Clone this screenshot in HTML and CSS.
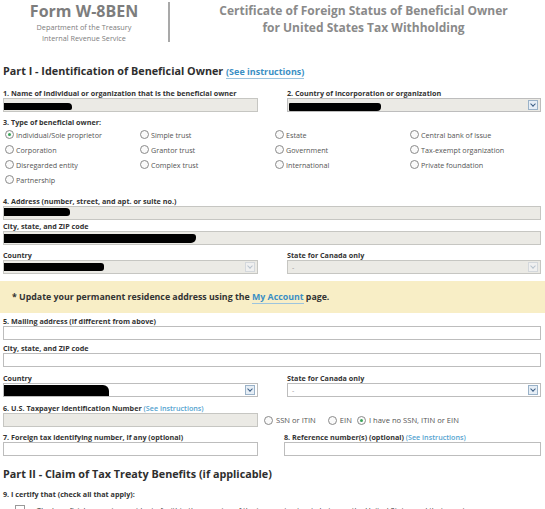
FILE: index.html
```html
<!DOCTYPE html>
<html>
<head>
<meta charset="utf-8">
<link rel="stylesheet" href="styles.css">
</head>
<body>
<div class="page">
  <header class="header">
    <div class="brand">
      <div class="form-name">Form W-8BEN</div>
      <div class="dept">Department of the Treasury</div>
      <div class="dept">Internal Revenue Service</div>
    </div>
    <div class="sep"></div>
    <div class="title">
      <div>Certificate of Foreign Status of Beneficial Owner</div>
      <div>for United States Tax Withholding</div>
    </div>
  </header>

  <h2 class="part part1">Part I - Identification of Beneficial Owner <a class="link-h">(See instructions)</a></h2>

  <div class="row two first">
    <div class="field">
      <div class="label">1. Name of individual or organization that is the beneficial owner</div>
      <div class="input gray"><span class="blob b-name"></span></div>
    </div>
    <div class="field">
      <div class="label">2. Country of incorporation or organization</div>
      <div class="input select white-sel"><span class="blob b-country2"></span><span class="arrow"></span></div>
    </div>
  </div>

  <div class="label type-label">3. Type of beneficial owner:</div>
  <div class="radios">
    <div class="radio"><span class="dot checked"></span>Individual/Sole proprietor</div>
    <div class="radio"><span class="dot"></span>Simple trust</div>
    <div class="radio"><span class="dot"></span>Estate</div>
    <div class="radio"><span class="dot"></span>Central bank of issue</div>
    <div class="radio"><span class="dot"></span>Corporation</div>
    <div class="radio"><span class="dot"></span>Grantor trust</div>
    <div class="radio"><span class="dot"></span>Government</div>
    <div class="radio"><span class="dot"></span>Tax-exempt organization</div>
    <div class="radio"><span class="dot"></span>Disregarded entity</div>
    <div class="radio"><span class="dot"></span>Complex trust</div>
    <div class="radio"><span class="dot"></span>International</div>
    <div class="radio"><span class="dot"></span>Private foundation</div>
    <div class="radio"><span class="dot"></span>Partnership</div>
  </div>

  <div class="field full addr">
    <div class="label">4. Address (number, street, and apt. or suite no.)</div>
    <div class="input gray"><span class="blob b-addr"></span></div>
  </div>
  <div class="field full city">
    <div class="label">City, state, and ZIP code</div>
    <div class="input gray"><span class="blob b-city"></span></div>
  </div>
  <div class="row two country">
    <div class="field">
      <div class="label">Country</div>
      <div class="input select gray"><span class="blob b-country"></span><span class="arrow faint"></span></div>
    </div>
    <div class="field">
      <div class="label">State for Canada only</div>
      <div class="input select gray"><span class="dash">-</span><span class="arrow faint"></span></div>
    </div>
  </div>

  <div class="banner"><span>* Update your permanent residence address using the <a class="link-b">My Account</a> page.</span></div>

  <div class="field full mail">
    <div class="label">5. Mailing address (if different from above)</div>
    <div class="input white"></div>
  </div>
  <div class="field full city2">
    <div class="label">City, state, and ZIP code</div>
    <div class="input white"></div>
  </div>
  <div class="row two country2">
    <div class="field">
      <div class="label">Country</div>
      <div class="input select white"><span class="blob b-country3"></span><span class="arrow"></span></div>
    </div>
    <div class="field">
      <div class="label">State for Canada only</div>
      <div class="input select white"><span class="dash">-</span><span class="arrow"></span></div>
    </div>
  </div>

  <div class="row tin">
    <div class="field tin-field">
      <div class="label">6. U.S. Taxpayer Identification Number <a class="link-s">(See instructions)</a></div>
      <div class="input gray"></div>
    </div>
    <div class="tin-radios">
      <div class="radio r-ssn"><span class="dot"></span>SSN or ITIN</div>
      <div class="radio r-ein"><span class="dot"></span>EIN</div>
      <div class="radio"><span class="dot checked"></span>I have no SSN, ITIN or EIN</div>
    </div>
  </div>

  <div class="row two ref">
    <div class="field">
      <div class="label">7. Foreign tax identifying number, if any (optional)</div>
      <div class="input white"></div>
    </div>
    <div class="field">
      <div class="label">8. Reference number(s) (optional) <a class="link-s">(See instructions)</a></div>
      <div class="input white"></div>
    </div>
  </div>

  <h2 class="part part2">Part II - Claim of Tax Treaty Benefits (if applicable)</h2>
  <div class="label certify">9. I certify that (check all that apply):</div>
  <div class="treaty"><span class="check"></span><span>The beneficial owner is a resident of <b>   </b> within the meaning of the income tax treaty between the United States and that country.</span></div>
</div>
</body>
</html>
```
FILE: styles.css
```css
html, body {
  margin: 0;
  padding: 0;
  background: #ffffff;
}
body {
  font-family: "Open Sans", "Liberation Sans", sans-serif;
  color: #333333;
}
.page {
  width: 545px;
  height: 509px;
  overflow: hidden;
}
.header {
  display: flex;
  height: 48px;
}
.brand {
  width: 168px;
  text-align: center;
  padding-top: 1px;
  color: #7d7d7d;
}
.form-name {
  font-size: 16px;
  font-weight: 700;
  line-height: 21px;
}
.dept {
  font-size: 7.3px;
  line-height: 10.5px;
}
.sep {
  width: 2px;
  height: 40px;
  margin-top: 2px;
  background: #a9a9a9;
}
.title {
  flex: 1;
  text-align: center;
  padding-left: 12px;
  padding-top: 2px;
  font-size: 12px;
  font-weight: 700;
  line-height: 17px;
  color: #8a8a8a;
}
.part {
  margin: 0;
  padding-left: 3px;
  font-size: 10.8px;
  font-weight: 700;
  line-height: 14px;
  color: #2e2e2e;
}
.part1 { margin-top: 16px; }
.link-h {
  color: #3b8fc4;
  font-size: 9px;
  border-bottom: 1px solid #9cc4de;
}
.link-s {
  color: #55a3cf;
  font-weight: 600;
}
.link-b {
  color: #3b8fc4;
  border-bottom: 1px solid #9cc4de;
}
.row { padding-left: 3px; }
.two {
  display: grid;
  grid-template-columns: 255px 254px;
  column-gap: 29px;
}
.label {
  font-size: 7.2px;
  font-weight: 700;
  line-height: 10px;
  white-space: nowrap;
  color: #333333;
}
.field.full { padding-left: 3px; width: 538px; }
.input {
  height: 12px;
  border: 1px solid #c6c6c2;
  box-sizing: content-box;
  display: flex;
  align-items: center;
  position: relative;
}
.input.gray { background: #ebeae5; }
.input.white, .input.white-sel { background: #ffffff; border-color: #bdbdbd; }
.input.white-sel { background: #ebeae5; }
.select { justify-content: space-between; }
.arrow {
  width: 8px;
  height: 8px;
  margin-right: 2px;
  border: 1px solid #9ab2c8;
  background: #e6eef6;
  position: relative;
}
.arrow::after {
  content: "";
  position: absolute;
  left: 2px;
  top: 1px;
  width: 3px;
  height: 3px;
  border-right: 1px solid #3d5f85;
  border-bottom: 1px solid #3d5f85;
  transform: rotate(45deg);
}
.arrow.faint { border-color: #d4d8dc; background: #f0f0f0; }
.arrow.faint::after { border-color: #b8c2cc; }
.dash { font-size: 7px; color: #9a9a9a; padding-left: 4px; }
.blob {
  display: block;
  background: #000000;
  align-self: flex-end;
}
.b-name { width: 68px; height: 7px; margin-bottom: 1px; border-radius: 0 4px 2px 0; }
.b-country2 { width: 92px; height: 8px; margin-left: 1px; border-radius: 1px 3px 4px 1px; }
.b-addr { width: 66px; height: 8px; margin-bottom: 3px; border-radius: 0 4px 3px 0; }
.b-city { width: 192px; height: 9px; margin-bottom: 1px; border-radius: 0 3px 5px 0; }
.b-country { width: 100px; height: 8px; margin-bottom: 2px; border-radius: 0 3px 3px 0; }
.b-country3 { width: 105px; height: 11px; margin-bottom: 0; border-radius: 0 6px 0 0; }

.first { margin-top: 9px; }
.type-label { padding-left: 3px; margin-top: 5px; }
.radios {
  display: grid;
  grid-template-columns: repeat(4, 135px);
  padding-left: 5px;
  margin-top: 0;
}
.radio {
  display: flex;
  align-items: center;
  height: 15px;
  font-size: 7.2px;
  color: #555555;
  white-space: nowrap;
}
.dot {
  width: 7px;
  height: 7px;
  border: 1px solid #8a8a8a;
  border-radius: 50%;
  margin-right: 2px;
  position: relative;
  background: #fafafa;
}
.dot.checked::after {
  content: "";
  position: absolute;
  left: 2px;
  top: 2px;
  width: 3px;
  height: 3px;
  border-radius: 50%;
  background: #3aa55a;
}
.addr { margin-top: 9px; }
.city { margin-top: 1px; }
.country { margin-top: 5px; }
.banner {
  margin-top: 7px;
  height: 32px;
  background: #f8eec6;
  padding-left: 12px;
  display: flex;
  align-items: center;
  font-size: 8.8px;
  font-weight: 700;
  color: #333333;
}
.mail { margin-top: 3px; }
.city2 { margin-top: 3px; }
.country2 { margin-top: 6px; }
.tin {
  display: flex;
  align-items: flex-end;
  margin-top: 6px;
}
.tin-field { width: 255px; }
.tin-radios {
  display: flex;
  padding-left: 6px;
}
.tin-radios .radio { height: 14px; font-size: 7.6px; }
.tin-radios .dot { margin-right: 3px; }
.r-ssn { margin-right: 12px; }
.r-ein { margin-right: 5px; }
.ref { margin-top: 5px; grid-template-columns: 255px 257px; column-gap: 26px; }
.part2 { margin-top: 11px; }
.certify { padding-left: 3px; margin-top: 8px; }
.treaty {
  display: flex;
  align-items: flex-start;
  gap: 12px;
  padding-left: 15px;
  margin-top: 6px;
  font-size: 7.5px;
  white-space: nowrap;
}
.check {
  width: 8px;
  height: 8px;
  border: 1px solid #999;
  flex: none;
}
```
